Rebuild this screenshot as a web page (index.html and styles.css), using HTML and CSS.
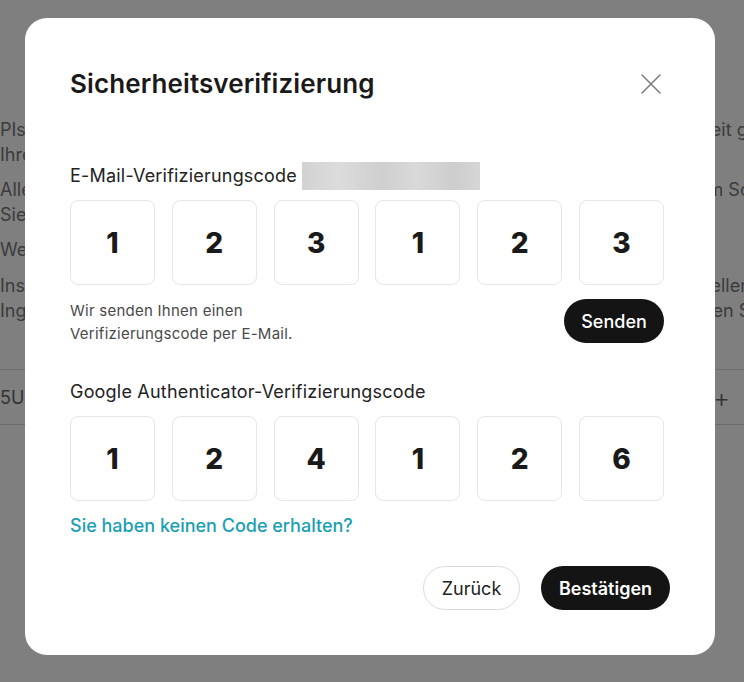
FILE: index.html
```html
<!DOCTYPE html>
<html lang="de">
<head>
    <meta charset="UTF-8">
    <meta name="viewport" content="width=device-width, initial-scale=1.0">
    <title>Sicherheitsverifizierung</title>
    <link rel="stylesheet" href="styles.css">
</head>
<body>
    <!-- Seite im Hintergrund -->
    <div class="page">
        <p class="page-text">PIs ermöglichen den Zugriff auf Ihr Konto, bitte bewahren Sie Ihren Schlüssel jederzeit gut auf, assets<br>Ihren Schlüssel niemals weitergeben</p>
        <p class="page-text">Aller Zugriff wird protokolliert, achten Sie auf verdächtige Aktivitäten, bei Fragen zum Sch<br>Sie sich bitte sofort an den Support</p>
        <p class="page-text">Wer hat Zugriff auf den Schlüssel</p>
        <p class="page-text">Insenden Sie die Anfrage nur über die offizielle Seite, alle Anfragen von anderen Quellen werden<br>Ing von Anfragen über nicht vertrauenswürdige Kanäle ist nicht erlaubt, bitte beachten Sie die Vorschr</p>
        <div class="page-row">
            <span>5U</span>
            <span class="page-plus">+</span>
        </div>
    </div>

    <div class="overlay">
        <div class="modal">
            <div class="modal-head">
                <h1 class="modal-title">Sicherheitsverifizierung</h1>
                <button class="close-btn" aria-label="Schließen">
                    <svg width="20" height="20" viewBox="0 0 20 20" fill="none" stroke="#7a7a7a" stroke-width="1.5" stroke-linecap="round">
                        <path d="M1 1L19 19M19 1L1 19"/>
                    </svg>
                </button>
            </div>

            <div class="field field-mail">
                <div class="field-label">E-Mail-Verifizierungscode <span class="masked"></span></div>
                <div class="code-row">
                    <div class="code-box">1</div>
                    <div class="code-box">2</div>
                    <div class="code-box">3</div>
                    <div class="code-box">1</div>
                    <div class="code-box">2</div>
                    <div class="code-box">3</div>
                </div>
                <div class="send-row">
                    <p class="send-hint">Wir senden Ihnen einen<br>Verifizierungscode per E-Mail.</p>
                    <button class="btn btn-dark btn-send">Senden</button>
                </div>
            </div>

            <div class="field field-ga">
                <div class="field-label">Google Authenticator-Verifizierungscode</div>
                <div class="code-row">
                    <div class="code-box">1</div>
                    <div class="code-box">2</div>
                    <div class="code-box">4</div>
                    <div class="code-box">1</div>
                    <div class="code-box">2</div>
                    <div class="code-box">6</div>
                </div>
                <a class="help-link" href="#">Sie haben keinen Code erhalten?</a>
            </div>

            <div class="modal-foot">
                <button class="btn btn-light">Zurück</button>
                <button class="btn btn-dark">Bestätigen</button>
            </div>
        </div>
    </div>
</body>
</html>
```
FILE: styles.css
```css
* {
    box-sizing: border-box;
}

html, body {
    margin: 0;
    height: 100%;
}

body {
    font-family: Inter, "Noto Sans", Arial, sans-serif;
    background: #ffffff;
    color: #1a1a1a;
    overflow: hidden;
}

/* Hintergrundseite */
.page {
    padding-top: 117px;
    color: #777;
    font-size: 18px;
    line-height: 25px;
    white-space: nowrap;
    overflow: hidden;
}

.page-text {
    margin: 0 0 10px;
}

.page-text:nth-child(3) {
    margin-bottom: 11px;
}

.page-row {
    margin-top: 46px;
    height: 56px;
    border-top: 1px solid #d6d6d6;
    border-bottom: 1px solid #d6d6d6;
    display: flex;
    align-items: center;
    justify-content: space-between;
    padding: 0 14px 0 0;
    color: #666;
}

.page-plus {
    font-size: 26px;
    font-weight: 300;
}

/* Overlay + Dialog */
.overlay {
    position: fixed;
    inset: 0;
    background: rgba(0, 0, 0, 0.5);
}

.modal {
    position: absolute;
    left: 25px;
    top: 18px;
    width: 690px;
    height: 637px;
    background: #fff;
    border-radius: 22px;
    padding: 50px 45px 44px;
}

.modal-head {
    display: flex;
    align-items: center;
    justify-content: space-between;
    height: 32px;
    padding-right: 9px;
}

.modal-title {
    margin: 0;
    font-size: 26px;
    line-height: 32px;
    font-weight: 600;
    color: #1a1a1a;
    letter-spacing: 0.1px;
}

.close-btn {
    border: none;
    background: none;
    padding: 0;
    width: 20px;
    height: 20px;
    cursor: pointer;
}

.close-btn svg {
    display: block;
}

.field {
    width: 594px;
}

.field-mail {
    margin-top: 62px;
}

.field-ga {
    margin-top: 33px;
}

.field-label {
    font-size: 18px;
    line-height: 28px;
    color: #222;
    letter-spacing: 0.2px;
    margin-bottom: 10px;
    display: flex;
    align-items: center;
}

.masked {
    display: inline-block;
    width: 178px;
    height: 28px;
    margin-left: 5px;
    background: linear-gradient(90deg, #d2d2d2 0%, #dcdcdc 20%, #cfcfcf 45%, #d9d9d9 65%, #cdcdcd 85%, #d6d6d6 100%);
}

.code-row {
    display: grid;
    grid-template-columns: repeat(6, 85px);
    justify-content: space-between;
}

.code-box {
    height: 85px;
    border: 1px solid #e6e6e6;
    border-radius: 8px;
    display: flex;
    align-items: center;
    justify-content: center;
    font-size: 28px;
    font-weight: 800;
    color: #1a1a1a;
}

.send-row {
    margin-top: 14px;
    display: flex;
    justify-content: space-between;
    align-items: flex-start;
}

.send-hint {
    margin: 0;
    font-size: 15px;
    line-height: 23px;
    letter-spacing: 0.25px;
    color: #4a4a4a;
}

.help-link {
    display: block;
    margin-top: 13px;
    font-size: 18px;
    line-height: 24px;
    font-weight: 500;
    color: #1aa0b2;
    text-decoration: none;
}

.modal-foot {
    margin-top: 28px;
    display: flex;
    justify-content: flex-end;
    gap: 21px;
}

.btn {
    height: 44px;
    border-radius: 22px;
    padding: 0 18px;
    font-family: inherit;
    font-size: 18px;
    cursor: pointer;
}

.btn-dark {
    background: #141414;
    color: #fff;
    border: none;
    font-weight: 600;
}

.btn-send {
    width: 100px;
    padding: 0;
    font-weight: 500;
}

.btn-light {
    background: #fff;
    color: #222;
    border: 1px solid #dcdcdc;
    width: 97px;
    padding: 0;
}

.modal-foot .btn-dark {
    width: 129px;
    padding: 0;
}
```
